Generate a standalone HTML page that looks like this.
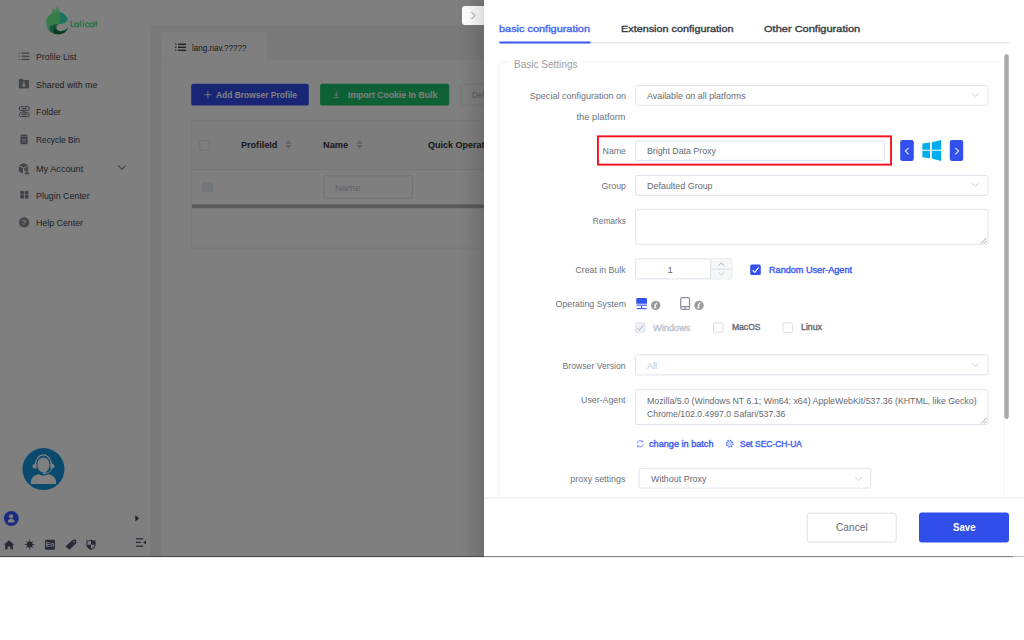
<!DOCTYPE html>
<html>
<head>
<meta charset="utf-8">
<title>Lalicat</title>
<style>
*{box-sizing:border-box;margin:0;padding:0}
html,body{width:1024px;height:640px;overflow:hidden;background:#fff;font-family:"Liberation Sans",sans-serif;}
.abs,.t,.b{position:absolute}
.t{white-space:pre;line-height:14px;height:14px;font-family:"Liberation Sans",sans-serif;}
#app{position:absolute;left:0;top:0;width:1024px;height:556px;overflow:hidden;background:#f3f3f4}
#under{position:absolute;left:0;top:0;width:1024px;height:556px;}
#mask{position:absolute;left:0;top:0;width:1024px;height:556px;background:rgba(0,0,0,.5)}
#shadow{position:absolute;left:458px;top:0;width:26px;height:556px;background:linear-gradient(to right,rgba(0,0,0,0),rgba(0,0,0,.03) 40%,rgba(0,0,0,.13))}
#drawer{position:absolute;left:484px;top:0;width:540px;height:556px;background:#fff;overflow:hidden}
#drawer .t,#drawer .b{margin-left:-484px}
.inp{position:absolute;border:1px solid #e2e5ed;border-radius:3px;background:#fff}
.cb{position:absolute;width:10.5px;height:10.5px;border:1px solid #dcdfe6;border-radius:2px;background:#fff}
svg{position:absolute;overflow:visible}
</style>
</head>
<body>
<div id="app">
 <div id="under">
  <svg style="left:0;top:0" width="1024" height="556" viewBox="0 0 1024 556">
   <rect x="0.00" y="0.00" width="150.20" height="556.00" rx="0.00" fill="#fff" />
   <rect x="150.20" y="0.00" width="874.00" height="25.50" rx="0.00" fill="#fff" />
   <path d="M162 62 V35.5 Q162 32 165.5 32 H263.5 Q267 32 267 35.5 V62 Z" fill="#fff" />
   <path d="M161 560 V63.5 Q161 60.5 164 60.5 H1024 V560 Z" fill="#fff" />
   <rect x="191.20" y="83.80" width="117.60" height="21.80" rx="2.20" fill="#324cec" />
   <rect x="320.10" y="83.80" width="129.10" height="21.80" rx="2.20" fill="#1cc26a" />
   <rect x="460.70" y="84.30" width="59.00" height="20.80" rx="1.70" fill="#fff" stroke="#e8ebf2" stroke-width="1" />
   <rect x="191.50" y="120.50" width="839.00" height="127.50" rx="0.00" fill="#fff" stroke="#eef0f4" stroke-width="1" />
   <rect x="192.00" y="121.00" width="838.00" height="48.00" rx="0.00" fill="#fafafa" />
   <rect x="192.00" y="169.00" width="838.00" height="1.00" rx="0.00" fill="#ebeef5" />
   <rect x="192.00" y="204.40" width="838.00" height="3.80" rx="0.00" fill="#b2b2b2" />
   <rect x="199.90" y="140.70" width="9.40" height="9.40" rx="1.10" fill="#fff" stroke="#dcdfe6" stroke-width="1" />
   <rect x="202.90" y="182.50" width="9.40" height="9.40" rx="1.10" fill="#e9eef8" stroke="#e4e8f0" stroke-width="1" />
   <rect x="323.90" y="175.80" width="88.50" height="22.50" rx="2.10" fill="#fff" stroke="#dfe2ea" stroke-width="1" />
  </svg>
  <!-- logo (page-coordinate svg) -->
  <svg style="left:0;top:0" width="150" height="40" viewBox="0 0 150 40">
   <path d="M51.5 14 L53.2 7.6 L55.3 10.8 L57.1 6.2 L60 12 L56 15 Z" fill="#6cf892" opacity=".8"/>
   <path d="M51.5 13.8 L55 12.4 L60 12 L64 13.9 L66.8 17 L67.9 19.1 L66 22 L63.8 23.3 L61 23.7 C58.400 23.9 56.300 25.2 56.300 27.4 C56.300 29.800 58.400 31 60.800 31 C63.600 31 66.200 29.400 68 27.400 C66.800 31.400 62.800 34.200 58.200 34.200 C51.500 34.200 46.100 29 46.100 22.400 C46.100 18.800 48.100 15.600 51.500 13.800 Z" fill="#6cf892"/>
   <path d="M59.200 12.800 L60 12 L64 13.900 L66.800 17 L67.900 19.100 L66 22 L63.800 23.300 L61 23.700 L59 23.800 L60 19 Z" fill="#38e8c4"/>
   <path d="M56.300 27.400 C56.300 25.600 57.400 24.400 59 23.900 L54.500 24.600 L50 26 L49.300 30.200 C51.500 32.700 54.500 34.200 58.200 34.200 C62.800 34.200 66.800 31.400 68 27.400 C66.200 29.400 63.600 31 60.800 31 C58.400 31 56.300 29.800 56.300 27.400 Z" fill="#2ea884"/>
   <path d="M54.600 24.600 C54.200 27.200 55.600 31.600 60.800 31.900 C64 31.800 66.600 30 68 27.400 C66.800 31.400 62.800 34.200 58.200 34.200 C56.800 34.200 55 33.800 53.800 33.200 Z" fill="#1a683c"/>
   <g fill="none" stroke="#58ee8c" stroke-width="1.350" stroke-linecap="round" stroke-linejoin="round">
    <path d="M71.300 20.900 V26.500 H73.300"/>
    <circle cx="76.600" cy="24.700" r="1.900"/><path d="M78.600 22.800 V26.600"/>
    <path d="M80.800 20.800 V26.600"/>
    <path d="M83.500 22.900 V26.600 M83.500 20.700 V20.750"/>
    <path d="M88.900 23.500 A1.900 1.900 0 1 0 88.900 25.900"/>
    <circle cx="92" cy="24.700" r="1.900"/><path d="M94 22.800 V26.600"/>
    <path d="M96.300 21.200 V26.600 M95.500 22.800 H97.300"/>
   </g>
  </svg>
  <!-- menu icons -->
  <svg style="left:18px;top:50px" width="13" height="12" viewBox="18 50 13 12" fill="#5c6070">
   <rect x="18.6" y="52.6" width="1" height="1"/><rect x="21.4" y="52.6" width="8" height="1"/>
   <rect x="18.6" y="55.7" width="1" height="1"/><rect x="21.4" y="55.7" width="8" height="1"/>
   <rect x="18.6" y="58.8" width="1" height="1"/><rect x="21.4" y="58.8" width="8" height="1"/>
  </svg>
  <svg style="left:18px;top:78px" width="12" height="12" viewBox="18 78 12 12">
   <path d="M18.8 79.4 q0-.6 .6-.6 h3.2 l1 1.2 h4.8 q.6 0 .6 .6 v7.2 q0 .6 -.6 .6 h-9 q-.6 0 -.6-.6 z" fill="#8a8d96"/>
   <path d="M23.3 81.2 h1.200 v3.200 h1.700 l-2.300 2.700 l-2.300 -2.700 h1.700 z" fill="#fff"/>
  </svg>
  <svg style="left:18px;top:105px" width="12" height="13" viewBox="18 105 12 13" fill="none" stroke="#74788a" stroke-width="1">
   <rect x="19.500" y="106.700" width="9.600" height="3.700" rx="1.200"/><rect x="19.500" y="112.900" width="9.600" height="3.700" rx="1.200"/>
   <path d="M21.800 108.550 h5 M21.800 114.750 h5 M21.500 110.400 L27 112.900" />
  </svg>
  <svg style="left:19px;top:133px" width="10" height="12" viewBox="19 133 10 12">
   <path d="M21.6 134.4 h4.8 l.6 1.2 h1 v1 h-8 v-1 h1 z M20.4 137 h7.2 v6.4 q0 .8 -.8 .8 h-5.6 q-.8 0 -.8 -.8 z" fill="#80838e"/>
   <circle cx="24" cy="140.4" r="1.5" fill="none" stroke="#e8e8ec" stroke-width=".8"/>
  </svg>
  <svg style="left:18px;top:162px" width="12" height="13" viewBox="18 162 12 13" fill="#8a8d96">
   <path d="M23.6 163 l4.6 2.2 l-4.6 2.2 l-4.6 -2.2 z"/>
   <path d="M18.8 166.2 l4.2 2 v5.4 l-4.2 -2.2 z"/>
   <path d="M24.2 168.2 l4.2 -2 v2.2 q-2.2 .2 -3 2.4 l-1.2 .8 z"/>
   <circle cx="27" cy="170.4" r="1.4"/><path d="M24.4 174.2 q0 -2.2 2.6 -2.2 q2.6 0 2.6 2.2 z"/>
  </svg>
  <svg style="left:19px;top:190px" width="10" height="10" viewBox="19 190 10 10" fill="#7e828e">
   <rect x="20.200" y="190.900" width="3.800" height="3.500" rx=".9"/><rect x="24.700" y="190.900" width="3.800" height="3.500" rx=".9"/>
   <rect x="20.200" y="195.100" width="3.800" height="3.500" rx=".9"/><rect x="24.700" y="195.100" width="3.800" height="3.500" rx=".9"/>
  </svg>
  <svg style="left:18px;top:217px" width="12" height="12" viewBox="18 217 12 12">
   <circle cx="24.1" cy="222.4" r="5.2" fill="#8a8d96"/>
   <text x="24.1" y="225.1" font-family="Liberation Sans" font-size="7.5" font-weight="700" fill="#fff" text-anchor="middle">?</text>
  </svg>
  <!-- My Account chevron -->
  <svg style="left:117px;top:164px" width="10" height="7" viewBox="117 164 10 7"><path d="M118.2 165.500 L122 169.200 L125.8 165.500" fill="none" stroke="#868a94" stroke-width="1.050"/></svg>
  <!-- tab list icon -->
  <svg style="left:174px;top:41px" width="13" height="12" viewBox="174 41 13 12" fill="#303133">
   <rect x="175.2" y="43.6" width="1.2" height="1.3"/><rect x="178" y="43.6" width="8" height="1.3"/>
   <rect x="175.2" y="46.6" width="1.2" height="1.3"/><rect x="178" y="46.6" width="8" height="1.3"/>
   <rect x="175.2" y="49.6" width="1.2" height="1.3"/><rect x="178" y="49.6" width="8" height="1.3"/>
  </svg>
  <!-- button icons -->
  <svg style="left:204px;top:91px" width="8" height="8" viewBox="204 91 8 8"><path d="M204.4 94.8 h7 M207.9 91.3 v7" stroke="#fff" stroke-width=".9" fill="none"/></svg>
  <svg style="left:333px;top:91px" width="7" height="8" viewBox="333 91 7 8"><path d="M336.3 91.6 v4.2 M334.4 94.2 l1.9 1.8 l1.9 -1.8 M333.7 97.6 h5.2" stroke="#fff" stroke-width=".8" fill="none"/></svg>
  <!-- sort carets -->
  <svg style="left:284px;top:139px" width="9" height="11" viewBox="284 139 9 11" fill="#c0c4cc"><path d="M288.4 140.2 l3.4 3.5 h-6.8 z M288.4 148.6 l3.4 -3.5 h-6.8 z"/></svg>
  <svg style="left:355px;top:139px" width="9" height="11" viewBox="355 139 9 11" fill="#c0c4cc"><path d="M359.6 140.2 l3.4 3.5 h-6.8 z M359.6 148.6 l3.4 -3.5 h-6.8 z"/></svg>
  <!-- headset -->
  <svg style="left:22px;top:447px" width="44" height="44" viewBox="22 447 44 44">
   <circle cx="43.5" cy="469.1" r="21" fill="#1494dc"/>
   <ellipse cx="43.4" cy="464.9" rx="6.1" ry="7.5" fill="#fff"/>
   <path d="M35.1 466.5 A8.3 11.6 0 0 1 51.7 466.5" fill="none" stroke="#fff" stroke-width="1.2"/>
   <path d="M36.6 463.4 q-4.2 .4 -4.200 2.800 q0 2.400 4.200 2.600 z M50.400 463.4 q4.2 .4 4.200 2.800 q0 2.400 -4.200 2.600 z" fill="#fff"/>
   <path d="M51.800 468 q-.6 4.600 -6.600 5.200" fill="none" stroke="#fff" stroke-width=".9"/>
   <ellipse cx="44.4" cy="473.3" rx="1.5" ry="1" fill="#fff"/>
   <path d="M31 483.900 v-2.400 q0 -5 7.800 -7.400 q4.600 3 9.400 0 q7.800 2.400 7.800 7.400 v2.400 z" fill="#fff"/>
  </svg>
  <!-- avatar -->
  <svg style="left:3px;top:510px" width="17" height="17" viewBox="3 510 17 17">
   <circle cx="11.3" cy="518.4" r="7.4" fill="#3454ff"/>
   <circle cx="11.1" cy="516.500" r="2.150" fill="#fff"/>
   <path d="M7.900 522.400 v-1.200 q0 -2.200 3.300 -2.200 q3.300 0 3.300 2.200 v1.200 z" fill="#fff"/>
  </svg>
  <svg style="left:134px;top:514px" width="6" height="9" viewBox="134 514 6 9"><path d="M135.300 515.200 l3.800 3.100 l-3.800 3.100 z" fill="#40444f"/></svg>
  <!-- bottom icons -->
  <svg style="left:0;top:536px" width="150" height="18" viewBox="0 536 150 18" fill="#50566a">
   <path d="M9 540.200 l5.200 4.600 h-1.300 v4.400 h-2.600 v-2.800 h-2.600 v2.800 h-2.600 v-4.400 h-1.300 z"/>
   <circle cx="29.700" cy="544.500" r="3"/>
   <path d="M29.700 539.500 v10 M24.700 544.500 h10 M26.200 541 l7 7 M33.200 541 l-7 7" stroke="#50566a" stroke-width=".8"/>
   <rect x="45" y="539.700" width="10" height="10" rx="1.300"/>
   <text x="50" y="547.400" font-family="Liberation Sans" font-size="6.500" font-weight="700" fill="#fff" text-anchor="middle">En</text>
   <path d="M65.500 546.400 l7 -6.400 l3.600 -.4 l.2 3.600 l-7 6.600 z"/>
   <circle cx="74" cy="541.800" r=".8" fill="#fff"/>
   <path d="M91 539.400 q2.400 1.200 4.600 1.200 v4.200 q0 3.400 -4.600 5.200 q-4.600 -1.800 -4.600 -5.200 v-4.200 q2.200 0 4.600 -1.200 z"/>
   <path d="M91 540.600 v4.100 h-3.600 v-3.200 q1.800 -.1 3.600 -.9 z M91 544.700 h3.600 v.1 q0 2.600 -3.600 4.200 z" fill="#fff"/>
   <path d="M136 538.200 h7.200 v1.300 h-7.200 z M136 541.800 h5 v1.300 h-5 z M136 545.400 h7.200 v1.300 h-7.200 z M146 540.400 v4 l-3 -2 z"/>
  </svg>

<span class="t" style="top:49.50px;font-size:9px;font-weight:400;color:#3a3e4a;left:35.60px;transform:scaleX(0.9612);transform-origin:0 50%;">Profile List</span>
<span class="t" style="top:78.10px;font-size:9px;font-weight:400;color:#3a3e4a;left:35.60px;transform:scaleX(0.9819);transform-origin:0 50%;">Shared with me</span>
<span class="t" style="top:105.00px;font-size:9px;font-weight:400;color:#3a3e4a;left:35.60px;transform:scaleX(0.9798);transform-origin:0 50%;">Folder</span>
<span class="t" style="top:133.00px;font-size:9px;font-weight:400;color:#3a3e4a;left:35.60px;transform:scaleX(0.9257);transform-origin:0 50%;">Recycle Bin</span>
<span class="t" style="top:161.75px;font-size:9px;font-weight:400;color:#3a3e4a;left:35.60px;transform:scaleX(1.0154);transform-origin:0 50%;">My Account</span>
<span class="t" style="top:188.50px;font-size:9px;font-weight:400;color:#3a3e4a;left:35.60px;transform:scaleX(0.9854);transform-origin:0 50%;">Plugin Center</span>
<span class="t" style="top:216.00px;font-size:9px;font-weight:400;color:#3a3e4a;left:35.60px;transform:scaleX(0.9785);transform-origin:0 50%;">Help Center</span>
<span class="t" style="top:40.50px;font-size:9px;font-weight:400;color:#303133;left:192.00px;transform:scaleX(0.8934);transform-origin:0 50%;">lang.nav.?????</span>
<span class="t" style="top:87.70px;font-size:9px;font-weight:700;color:#fff;left:216.00px;transform:scaleX(0.9362);transform-origin:0 50%;">Add Browser Profile</span>
<span class="t" style="top:87.70px;font-size:9px;font-weight:700;color:#fff;left:347.50px;transform:scaleX(0.9590);transform-origin:0 50%;">Import Cookie In Bulk</span>
<span class="t" style="top:87.70px;font-size:9px;font-weight:700;color:#c0c4cc;left:472.00px;transform:scaleX(0.8884);transform-origin:0 50%;">Delete</span>
<span class="t" style="top:137.70px;font-size:9px;font-weight:700;color:#303133;left:240.60px;transform:scaleX(1.0079);transform-origin:0 50%;">ProfileId</span>
<span class="t" style="top:137.70px;font-size:9px;font-weight:700;color:#303133;left:323.00px;transform:scaleX(1.0198);transform-origin:0 50%;">Name</span>
<span class="t" style="top:137.70px;font-size:9px;font-weight:700;color:#303133;left:427.80px;transform:scaleX(0.9998);transform-origin:0 50%;">Quick Operation</span>
<span class="t" style="top:180.50px;font-size:9px;font-weight:400;color:#c0c4cc;left:335.30px;transform:scaleX(1.0535);transform-origin:0 50%;">Name</span>
 </div>
 <div id="mask"></div>
 <!-- drawer toggle -->
 <div class="abs" style="left:462px;top:6px;width:26px;height:19px;background:#fff;border-radius:3px"></div>
 <svg style="left:469px;top:11px" width="8" height="9" viewBox="0 0 8 9"><path d="M2.5 1 L6 4.5 L2.5 8" fill="none" stroke="#8a8fa0" stroke-width="1"/></svg>
 <div id="shadow"></div>
 <div id="drawer">
  <svg class="b" style="left:0;top:0" width="1024" height="556" viewBox="0 0 1024 556">
   <rect x="499.40" y="41.90" width="510.00" height="1.50" rx="0.00" fill="#e5e7f1" />
   <rect x="499.40" y="41.50" width="91.10" height="2.00" rx="0.00" fill="#3c58f3" />
   <rect x="499.50" y="61.90" width="504.60" height="449.00" rx="3.50" fill="none" stroke="#f1f2f6" stroke-width="1" />
   <rect x="509.50" y="58.00" width="72.00" height="10.00" rx="0.00" fill="#fff" />
   <rect x="1004.30" y="54.30" width="4.50" height="364.70" rx="2.25" fill="#a9a9a9" />
   <rect x="635.50" y="85.50" width="352.50" height="19.90" rx="2.10" fill="#fff" stroke="#e1e4ec" stroke-width="1" />
   <rect x="597.95" y="136.35" width="293.10" height="28.30" rx="0.00" fill="none" stroke="#f7111c" stroke-width="1.9" />
   <rect x="635.50" y="140.90" width="249.00" height="19.50" rx="2.10" fill="#fff" stroke="#e1e4ec" stroke-width="1" />
   <rect x="635.50" y="175.50" width="352.50" height="19.90" rx="2.10" fill="#fff" stroke="#e1e4ec" stroke-width="1" />
   <rect x="635.50" y="209.50" width="352.50" height="34.80" rx="2.10" fill="#fff" stroke="#e1e4ec" stroke-width="1" />
   <rect x="635.50" y="258.90" width="96.50" height="20.00" rx="2.10" fill="#fff" stroke="#e1e4ec" stroke-width="1" />
   <path d="M710.7 259.4 H729.5 Q731.5 259.4 731.5 261.4 V276.4 Q731.5 278.4 729.5 278.4 H710.7 Z" fill="#f5f7fa" />
   <rect x="710.20" y="259.40" width="1.00" height="19.00" rx="0.00" fill="#dcdfe6" />
   <rect x="711.20" y="268.70" width="20.30" height="1.00" rx="0.00" fill="#dcdfe6" />
   <rect x="635.50" y="354.80" width="352.50" height="20.10" rx="2.10" fill="#fff" stroke="#e1e4ec" stroke-width="1" />
   <rect x="635.50" y="389.70" width="352.50" height="34.80" rx="2.10" fill="#fff" stroke="#e1e4ec" stroke-width="1" />
   <rect x="639.00" y="468.30" width="231.80" height="19.80" rx="2.10" fill="#fff" stroke="#e1e4ec" stroke-width="1" />
   <rect x="750.20" y="264.50" width="10.60" height="10.50" rx="1.60" fill="#3451f2" />
   <rect x="635.70" y="322.90" width="9.20" height="9.30" rx="1.10" fill="#edf2fc" stroke="#dcdfe6" stroke-width="1" />
   <rect x="713.50" y="322.90" width="9.40" height="9.40" rx="1.10" fill="#fff" stroke="#dcdfe6" stroke-width="1" />
   <rect x="783.00" y="322.90" width="9.40" height="9.40" rx="1.10" fill="#fff" stroke="#dcdfe6" stroke-width="1" />
   <rect x="900.20" y="140.00" width="13.60" height="20.90" rx="2.20" fill="#3350ec" />
   <rect x="949.80" y="140.00" width="13.40" height="20.90" rx="2.20" fill="#3350ec" />
   <rect x="484.00" y="498.00" width="540.00" height="58.00" rx="0.00" fill="#fff" />
   <rect x="484.00" y="497.50" width="540.00" height="1.00" rx="0.00" fill="#e6e8ee" />
   <rect x="807.20" y="513.10" width="89.00" height="29.00" rx="2.50" fill="#fff" stroke="#dcdfe6" stroke-width="1" />
   <rect x="919.00" y="512.60" width="90.00" height="30.00" rx="3.00" fill="#2f4eea" />
  </svg>
  <!-- select chevrons -->
  <svg class="b" style="left:971px;top:92px" width="9" height="6" viewBox="0 0 9 6"><path d="M1.200 1.200 L4.500 4.400 L7.800 1.200" fill="none" stroke="#c0c4cc" stroke-width=".9"/></svg>
  <svg class="b" style="left:971px;top:182px" width="9" height="6" viewBox="0 0 9 6"><path d="M1.200 1.200 L4.500 4.400 L7.800 1.200" fill="none" stroke="#c0c4cc" stroke-width=".9"/></svg>
  <svg class="b" style="left:971px;top:361.700px" width="9" height="6" viewBox="0 0 9 6"><path d="M1.200 1.200 L4.500 4.400 L7.800 1.200" fill="none" stroke="#c0c4cc" stroke-width=".9"/></svg>
  <svg class="b" style="left:854.200px;top:475.500px" width="9" height="6" viewBox="0 0 9 6"><path d="M1.200 1.200 L4.500 4.400 L7.800 1.200" fill="none" stroke="#c0c4cc" stroke-width=".9"/></svg>
  <!-- arrows in blue buttons -->
  <svg class="b" style="left:900px;top:140px" width="14" height="21" viewBox="900 140 14 21"><path d="M908.600 147.800 L905.400 151 L908.600 154.300" fill="none" stroke="#dfe4ff" stroke-width="1.100"/></svg>
  <svg class="b" style="left:949.700px;top:140px" width="14" height="21" viewBox="949.700 140 14 21"><path d="M955 147.800 L958.300 151 L955 154.300" fill="none" stroke="#dfe4ff" stroke-width="1.100"/></svg>
  <!-- windows logo -->
  <svg class="b" style="left:922px;top:139px" width="20" height="23" viewBox="922 139 20 23" fill="#00adef">
   <path d="M922.400 143.600 L930 142.500 V149.700 H922.400 Z M931.800 142.200 L941.100 140 V149.700 H931.800 Z M922.400 150.700 H930 V158.300 L922.400 157.200 Z M931.800 150.700 H941.100 V160.900 L931.800 158.600 Z"/>
  </svg>
  <!-- textarea resize handles -->
  <svg class="b" style="left:980px;top:237px" width="7" height="7" viewBox="0 0 7 7"><path d="M1 6.500 L6.500 1 M4 6.500 L6.500 4" stroke="#7a7a7a" stroke-width=".7"/></svg>
  <svg class="b" style="left:980px;top:417.200px" width="7" height="7" viewBox="0 0 7 7"><path d="M1 6.500 L6.500 1 M4 6.500 L6.500 4" stroke="#7a7a7a" stroke-width=".7"/></svg>
  <!-- spinner arrows -->
  <svg class="b" style="left:717px;top:261px" width="9" height="16" viewBox="717 261 9 16" fill="none" stroke-width=".9"><path d="M718.400 265.700 L721.300 263 L724.200 265.700" stroke="#a0a3aa"/><path d="M718.400 272.500 L721.300 275.200 L724.200 272.500" stroke="#c0c4cc"/></svg>
  <!-- check marks -->
  <svg class="b" style="left:750px;top:264px" width="12" height="12" viewBox="750 264 12 12"><path d="M752.600 270.200 L754.800 272.300 L758.600 267.300" fill="none" stroke="#fff" stroke-width="1.150"/></svg>
  <svg class="b" style="left:635px;top:322px" width="12" height="12" viewBox="635 322 12 12"><path d="M637.300 328.200 L639.400 330.200 L643.200 325.400" fill="none" stroke="#c0c4cc" stroke-width="1.100"/></svg>
  <!-- OS icons -->
  <svg class="b" style="left:636px;top:297px" width="12" height="13" viewBox="636 297 12 13" fill="#3451f2">
   <path d="M636.300 299.200 q0 -1.200 1.200 -1.200 h8.300 q1.200 0 1.200 1.200 v4.500 h-10.700 z"/>
   <rect x="636.300" y="304.600" width="10.700" height="1.100"/>
   <rect x="641.100" y="305.600" width="1.100" height="2.600"/>
   <rect x="636.900" y="308" width="9.700" height="1.100"/>
  </svg>
  <svg class="b" style="left:650px;top:300px" width="11" height="11" viewBox="650 300 11 11"><circle cx="655.700" cy="305.400" r="4.700" fill="#9c9c9c"/><path d="M656.300 302.400 a.8 .8 0 1 1 -.01 0 z M654.600 304.300 h1.800 l-.8 3.300 h.8 l-.1 .6 h-2.200 l.8 -3.300 h-.5 z" fill="#fff"/></svg>
  <svg class="b" style="left:679px;top:296px" width="12" height="15" viewBox="679 296 12 15" fill="none" stroke="#8a90a2" stroke-width="1.2">
   <rect x="680.700" y="297.700" width="8.800" height="11.700" rx="1.500"/><path d="M680.700 306.600 h8.800 M685.100 306.600 v2.800"/>
  </svg>
  <svg class="b" style="left:693px;top:300px" width="11" height="11" viewBox="693 300 11 11"><circle cx="699" cy="305.400" r="4.700" fill="#9c9c9c"/><path d="M699.600 302.400 a.8 .8 0 1 1 -.01 0 z M697.900 304.300 h1.800 l-.8 3.300 h.8 l-.1 .6 h-2.200 l.8 -3.300 h-.5 z" fill="#fff"/></svg>
  <!-- refresh + gear -->
  <svg class="b" style="left:636px;top:439px" width="9" height="9" viewBox="636 439 9 9" fill="none" stroke="#5a74f4" stroke-width=".85">
   <path d="M637.100 443.300 a3.100 3.100 0 0 1 5.500 -1.500 M643.300 444.300 a3.100 3.100 0 0 1 -5.500 1.500"/><path d="M642.900 440.300 v1.700 h-1.700 M637.500 447.300 v-1.700 h1.700" stroke-width=".6"/>
  </svg>
  <svg class="b" style="left:725px;top:439px" width="10" height="10" viewBox="725 439 10 10" fill="none" stroke="#5a74f4">
   <circle cx="729.600" cy="443.700" r="3.500" stroke-width="1.100" stroke-dasharray="1.400 1.349"/><circle cx="729.600" cy="443.700" r="2.700" stroke-width=".8"/><circle cx="729.600" cy="443.700" r="1.100" stroke-width=".55"/>
  </svg>

<span class="t" style="top:22.10px;font-size:9.7px;font-weight:400;color:#4665f5;left:499.40px;transform:scaleX(1.1265);transform-origin:0 50%;-webkit-text-stroke:.38px #4665f5;">basic configuration</span>
<span class="t" style="top:22.10px;font-size:9.7px;font-weight:400;color:#3a3d45;left:620.80px;transform:scaleX(1.1170);transform-origin:0 50%;-webkit-text-stroke:.38px #3a3d45;">Extension configuration</span>
<span class="t" style="top:22.10px;font-size:9.7px;font-weight:400;color:#3a3d45;left:763.60px;transform:scaleX(1.1378);transform-origin:0 50%;-webkit-text-stroke:.38px #3a3d45;">Other Configuration</span>
<span class="t" style="top:57.60px;font-size:10.2px;font-weight:400;color:#9a9da6;left:513.50px;transform:scaleX(0.9835);transform-origin:0 50%;">Basic Settings</span>
<span class="t" style="top:88.50px;font-size:9px;font-weight:400;color:#6e727a;right:398.00px;transform:scaleX(1.0018);transform-origin:100% 50%;">Special configuration on</span>
<span class="t" style="top:109.75px;font-size:9px;font-weight:400;color:#6e727a;right:398.00px;transform:scaleX(1.0309);transform-origin:100% 50%;">the platform</span>
<span class="t" style="top:144.00px;font-size:9px;font-weight:400;color:#6e727a;right:398.00px;transform:scaleX(0.9785);transform-origin:100% 50%;">Name</span>
<span class="t" style="top:178.50px;font-size:9px;font-weight:400;color:#6e727a;right:398.00px;transform:scaleX(0.9794);transform-origin:100% 50%;">Group</span>
<span class="t" style="top:213.75px;font-size:9px;font-weight:400;color:#6e727a;right:398.00px;transform:scaleX(0.9232);transform-origin:100% 50%;">Remarks</span>
<span class="t" style="top:262.50px;font-size:9px;font-weight:400;color:#6e727a;right:398.00px;transform:scaleX(0.9703);transform-origin:100% 50%;">Creat in Bulk</span>
<span class="t" style="top:297.00px;font-size:9px;font-weight:400;color:#6e727a;right:398.00px;transform:scaleX(0.9787);transform-origin:100% 50%;">Operating System</span>
<span class="t" style="top:358.50px;font-size:9px;font-weight:400;color:#6e727a;right:398.00px;transform:scaleX(0.9614);transform-origin:100% 50%;">Browser Version</span>
<span class="t" style="top:393.00px;font-size:9px;font-weight:400;color:#6e727a;right:398.00px;transform:scaleX(0.9774);transform-origin:100% 50%;">User-Agent</span>
<span class="t" style="top:471.75px;font-size:9px;font-weight:400;color:#6e727a;right:398.00px;transform:scaleX(0.9949);transform-origin:100% 50%;">proxy settings</span>
<span class="t" style="top:88.50px;font-size:9px;font-weight:400;color:#666a72;left:647.20px;transform:scaleX(0.9881);transform-origin:0 50%;">Available on all platforms</span>
<span class="t" style="top:143.50px;font-size:9px;font-weight:400;color:#666a72;left:647.20px;transform:scaleX(0.9755);transform-origin:0 50%;">Bright Data Proxy</span>
<span class="t" style="top:178.80px;font-size:9px;font-weight:400;color:#666a72;left:647.20px;transform:scaleX(0.9932);transform-origin:0 50%;">Defaulted Group</span>
<span class="t" style="top:262.50px;font-size:9.5px;font-weight:400;color:#666a72;left:667.50px;">1</span>
<span class="t" style="top:262.50px;font-size:9px;font-weight:400;color:#3f5bf3;left:768.50px;transform:scaleX(1.0116);transform-origin:0 50%;-webkit-text-stroke:.38px #3f5bf3;">Random User-Agent</span>
<span class="t" style="top:320.80px;font-size:9px;font-weight:400;color:#c0c4cc;left:653.00px;transform:scaleX(1.0270);transform-origin:0 50%;-webkit-text-stroke:.38px #c0c4cc;">Windows</span>
<span class="t" style="top:320.35px;font-size:9px;font-weight:400;color:#666a72;left:731.50px;transform:scaleX(0.9495);transform-origin:0 50%;-webkit-text-stroke:.38px #666a72;">MacOS</span>
<span class="t" style="top:320.35px;font-size:9px;font-weight:400;color:#666a72;left:801.00px;transform:scaleX(0.9760);transform-origin:0 50%;-webkit-text-stroke:.38px #666a72;">Linux</span>
<span class="t" style="top:358.50px;font-size:9px;font-weight:400;color:#c0c4cc;left:647.00px;transform:scaleX(0.9984);transform-origin:0 50%;">All</span>
<span class="t" style="top:393.75px;font-size:9px;font-weight:400;color:#666a72;left:647.20px;transform:scaleX(0.9771);transform-origin:0 50%;">Mozilla/5.0 (Windows NT 6.1; Win64; x64) AppleWebKit/537.36 (KHTML, like Gecko)</span>
<span class="t" style="top:407.25px;font-size:9px;font-weight:400;color:#666a72;left:647.20px;transform:scaleX(0.9671);transform-origin:0 50%;">Chrome/102.0.4997.0 Safari/537.36</span>
<span class="t" style="top:436.50px;font-size:9px;font-weight:400;color:#3f5bf3;left:648.50px;transform:scaleX(1.0147);transform-origin:0 50%;-webkit-text-stroke:.38px #3f5bf3;">change in batch</span>
<span class="t" style="top:436.50px;font-size:9px;font-weight:400;color:#3f5bf3;left:740.30px;transform:scaleX(0.9392);transform-origin:0 50%;-webkit-text-stroke:.38px #3f5bf3;">Set SEC-CH-UA</span>
<span class="t" style="top:471.75px;font-size:9px;font-weight:400;color:#666a72;left:651.00px;transform:scaleX(0.9905);transform-origin:0 50%;">Without Proxy</span>
<span class="t" style="top:521.20px;font-size:10px;font-weight:400;color:#666a72;left:835.70px;transform:scaleX(1.0180);transform-origin:0 50%;">Cancel</span>
<span class="t" style="top:521.20px;font-size:10px;font-weight:700;color:#fff;left:952.50px;transform:scaleX(0.9632);transform-origin:0 50%;">Save</span>
 </div>
</div>
<!-- bottom edge line -->
<svg style="left:0;top:550px" width="1024" height="10" viewBox="0 550 1024 10"><rect x="0" y="556" width="484" height="1" fill="#4b474d"/><rect x="484" y="556" width="529" height="1" fill="#8a828c"/><rect x="1013" y="556" width="11" height="1" fill="#c4c2c5"/><rect x="0" y="557" width="1013" height="1" fill="#efecf1"/></svg>
</body>
</html>
